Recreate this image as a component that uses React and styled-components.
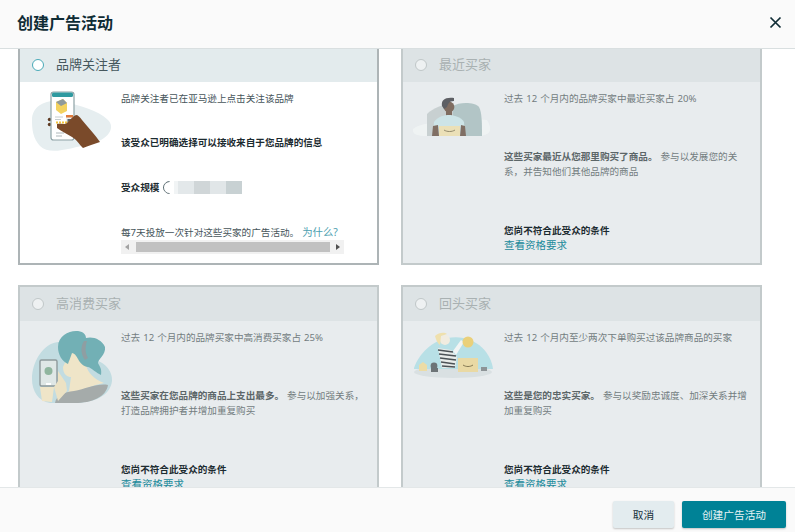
import React from "react";
import styled, { createGlobalStyle } from "styled-components";

const GlobalStyle = createGlobalStyle`
  html, body { margin: 0; padding: 0; background: #fff; }
  body { font-family: "Noto Sans", "Noto Sans CJK SC", sans-serif; }
`;

const Page = styled.div`
  display: flex;
  flex-direction: column;
  height: 100vh;
  overflow: hidden;
`;

const Header = styled.header`
  flex: none;
  box-sizing: border-box;
  height: 49px;
  display: flex;
  align-items: center;
  justify-content: space-between;
  padding: 0 13px 4px 17px;
  background: #fafafa;
  border-bottom: 1px solid #d9dfe0;
`;

const Title = styled.h1`
  margin: 0;
  font-size: 16px;
  font-weight: 700;
  color: #0f2c35;
`;

const CloseButton = styled.button`
  display: flex;
  padding: 0;
  border: 0;
  background: none;
  color: #0f2c35;
`;

const Body = styled.main`
  flex: 1;
  min-height: 0;
  overflow: hidden;
  padding-left: 18px;
`;

const Grid = styled.div`
  display: grid;
  grid-template-columns: 361px 361px;
  grid-auto-rows: 219px;
  column-gap: 22px;
  row-gap: 20px;
  margin-top: -3px;
`;

const Card = styled.section`
  box-sizing: border-box;
  display: flex;
  flex-direction: column;
  border: 2px solid ${(p) => (p.$disabled ? "#c3cacb" : "#adb4b6")};
  background: ${(p) => (p.$disabled ? "#e8ecee" : "#fff")};
`;

const CardHeader = styled.div`
  flex: none;
  height: 34px;
  display: flex;
  align-items: center;
  gap: 12px;
  padding-left: 12px;
  background: ${(p) => (p.$disabled ? "#dde3e5" : "#e3ebed")};
`;

const Radio = styled.span`
  box-sizing: border-box;
  width: 12px;
  height: 12px;
  border-radius: 50%;
  background: ${(p) => (p.$disabled ? "#eef1f2" : "#fff")};
  border: 1.5px solid ${(p) => (p.$disabled ? "#c0c7c8" : "#4aaab8")};
`;

const CardTitle = styled.span`
  margin-bottom: 3px;
  font-size: 13px;
  color: ${(p) => (p.$disabled ? "#a9b1b2" : "#46585d")};
`;

const CardBody = styled.div`
  flex: 1;
  min-height: 0;
  display: grid;
  grid-template-columns: 101px 1fr;
`;

const Illustration = styled.svg`
  display: block;
  width: 100px;
  height: 90px;
`;

const Copy = styled.div`
  padding-top: 9px;
  width: 243px;
`;

const Para = styled.p`
  margin: ${(p) => p.$top || 0}px 0 0;
  font-size: 9.6px;
  line-height: ${(p) => p.$line || 15}px;
  word-spacing: 0.5px;
  color: ${(p) => (p.$disabled ? "#737d7f" : "#46555a")};
`;

const Lead = styled.strong`
  font-weight: 700;
  color: ${(p) => (p.$disabled ? "#5c6668" : "#1c2b30")};
`;

const Ineligible = styled.p`
  margin: 44px 0 0;
  font-size: 9.6px;
  line-height: 15px;
  font-weight: 700;
  color: #1c2b30;
`;

const TextLink = styled.a`
  display: block;
  font-size: 10.5px;
  line-height: 15px;
  text-decoration: none;
  color: #1a8a9b;
`;

const InlineLink = styled.a`
  margin-left: 3px;
  color: #4d9fb0;
  font-size: 10.4px;
  text-decoration: none;
`;

const SizeRow = styled.div`
  display: flex;
  align-items: center;
  margin-top: 30px;
  height: 15px;
`;

const Spinner = styled.span`
  box-sizing: border-box;
  width: 13px;
  height: 13px;
  margin: 0 -2px 0 4px;
  flex: none;
  border-radius: 50%;
  border: 1.5px solid transparent;
  border-left-color: #5f7075;
  border-bottom-color: #5f7075;
  transform: rotate(45deg);
`;

const Tile = styled.span`
  width: ${(p) => p.$w}px;
  height: 13px;
  flex: none;
  background: ${(p) => p.$color};
`;

const ScrollBar = styled.div`
  display: flex;
  align-items: center;
  justify-content: space-between;
  width: 223px;
  height: 14px;
  background: #f1f1f1;
`;

const ScrollThumb = styled.div`
  width: 194px;
  height: 10px;
  background: #c1c1c1;
`;

const Arrow = styled.span`
  width: 0;
  height: 0;
  margin: 0 4px;
  border-top: 3px solid transparent;
  border-bottom: 3px solid transparent;
  ${(p) => (p.$right ? "border-left: 4px solid #505050;" : "border-right: 4px solid #a3a3a3;")}
`;

const Footer = styled.footer`
  flex: none;
  height: 45px;
  box-sizing: border-box;
  display: flex;
  justify-content: flex-end;
  gap: 8px;
  padding: 13px 9px 0 0;
  background: #fafafa;
  border-top: 1px solid #e3e7e8;
  position: relative;
`;

const Button = styled.button`
  width: ${(p) => (p.$primary ? 104 : 61)}px;
  height: 27px;
  padding: 0;
  border: 0;
  border-radius: 2px;
  font-family: inherit;
  font-size: 10.7px;
  color: ${(p) => (p.$primary ? "#e8f3f5" : "#16303a")};
  background: ${(p) => (p.$primary ? "#008296" : "#e3ecef")};
  box-shadow: 0 1px 2px rgba(0, 0, 0, 0.22);
`;

const FollowerArt = () => (
  <Illustration viewBox="0 0 100 90">
    <path d="M12 38C12 22 30 16 45 20C60 24 78 28 88 38C96 46 88 58 70 62C50 66 30 74 20 64C13 56 12 48 12 38Z" fill="#e6eef0" />
    <circle cx="29.5" cy="37.5" r="1.7" fill="#5d3a22" />
    <circle cx="29.5" cy="42.5" r="1.7" fill="#5d3a22" />
    <rect x="31" y="10" width="23" height="48" rx="2.5" fill="#fff" stroke="#8ea2a6" strokeWidth="1.2" />
    <rect x="32" y="10.5" width="21" height="4.5" rx="1.5" fill="#2f9aa0" />
    <path d="M36 20L43 17L47 21L47 29L41 32L36 28Z" fill="#f3d25f" />
    <path d="M36 20L43 17L47 21L41 24Z" fill="#8f9a9c" />
    <rect x="46" y="33" width="7" height="9" fill="#eef1f1" />
    <rect x="46" y="33" width="7" height="2.5" fill="#e07b3c" />
    <rect x="47.5" y="37" width="4" height="3.5" fill="#56646a" />
    <path d="M35 35H43M35 37.5H41" stroke="#b6c0c2" strokeWidth="0.8" />
    <path d="M36 40.5H50" stroke="#f2c33d" strokeWidth="2" strokeDasharray="2 1" />
    <path d="M36 51H44M36 54H42" stroke="#9aa5a8" strokeWidth="0.8" />
    <path d="M37 42C40 41 44 43 47 41C50 38 53 34 56 33C58 33 60 35 62 38C68 45 75 53 80 60C74 62 68 64 63 66C59 62 56 57 52 55C47 52 41 49 37 46Z" fill="#7a4a2a" />
  </Illustration>
);

const RecentArt = () => (
  <Illustration viewBox="0 0 100 90" opacity="0.85">
    <path d="M10 47C20 38 72 36 84 38C90 48 88 54 74 54L24 54C14 54 9 52 10 47Z" fill="#f1f5f5" />
    <path d="M24 54L24 32C30 26 40 22 50 22L50 54Z" fill="#c3cccd" />
    <path d="M50 24C56 20 72 20 76 25C79 30 79 42 79 54L50 54Z" fill="#a9bfc0" />
    <circle cx="46" cy="25" r="5.4" fill="#6d5648" />
    <path d="M39 24C38 18 42 15 51 16L51 19C46 19 45 22 44 25L41 27Z" fill="#45474c" />
    <rect x="43" y="29" width="6" height="5" fill="#6d5648" />
    <path d="M30 54L31 40C35 34 42 33 46 33C51 33 58 35 61 40L62 54Z" fill="#c9e3e6" />
    <path d="M29 54L30 44L35 43L36 54ZM57 54L58 43L62 44L63 54Z" fill="#6e5a4d" />
    <rect x="36" y="44" width="21" height="10" fill="#ecdfae" />
    <path d="M41 48C44 50 49 50 52 48" stroke="#6b6140" strokeWidth="0.8" fill="none" />
  </Illustration>
);

const SpenderArt = () => (
  <Illustration viewBox="0 0 100 90">
    <path d="M12 58C12 40 24 22 38 21C48 20 60 30 72 38C84 40 93 50 92 60C90 76 72 82 55 82L30 82C18 80 12 70 12 58Z" fill="#c2dce1" />
    <path d="M50 31L43 46C43 54 48 56 51 56L49 70L36 82L56 72C68 66 78 63 84 62C74 58 68 52 66 44L64 30Z" fill="#efe5c8" />
    <path d="M35 82C36 75 44 71 54 70C66 68 78 62 88 64C86 76 72 82 55 82Z" fill="#a5abaa" />
    <path d="M38 26C38 14 50 9 58 10C64 11 66 14 66 17C72 15 82 18 85 26C86 34 78 38 78 42C80 46 82 48 81 54C76 52 72 47 68 46C64 46 60 42 58 38C56 34 54 32 52 32C50 38 49 40 48 43C42 40 38 34 38 26Z" fill="#72b0b5" />
    <path d="M64 20C60 26 61 34 65 39L68 37C65 32 65 26 67 20Z" fill="#8f9ea2" />
    <path d="M20 66L22 80L32 81L34 66Z" fill="#efe5c8" />
    <rect x="20" y="39" width="17" height="26" rx="1.5" fill="#dfe7e6" stroke="#8f9a9c" strokeWidth="1.4" />
    <circle cx="28.5" cy="50" r="4" fill="#8fb59e" />
    <rect x="26" y="62" width="5" height="2" fill="#fff" />
    <path d="M38 50L46 62L47 70L38 80L34 66L38 60Z" fill="#ece2c4" />
  </Illustration>
);

const LoyalArt = () => (
  <Illustration viewBox="0 0 100 90">
    <ellipse cx="50" cy="51" rx="39" ry="6" fill="#d9e0e2" />
    <path d="M11 47C16 32 30 20 44 17C70 12 88 30 90 48L11 48Z" fill="#b8e0e6" />
    <circle cx="42" cy="19" r="5" fill="#f1ece0" />
    <path d="M32 15C36 11 42 11 44 13L38 15L37 24C34 22 33 18 32 15Z" fill="#efe0ad" />
    <path d="M35 27L48 29L54 36L52 47L39 47Z" fill="#e8ecea" />
    <path d="M35 29L50 31M36 33L53 35M37 37L53 39M38 41L52 43M39 45L52 46" stroke="#4c5357" strokeWidth="1.7" />
    <path d="M50 30L58 19L61 21L53 34Z" fill="#f2f4f4" />
    <circle cx="65" cy="21" r="5.5" fill="#ead07a" />
    <rect x="55" y="37" width="20" height="14" fill="#e9d9a4" />
    <path d="M60 44C63 46 67 46 70 44" stroke="#6b6140" strokeWidth="0.8" fill="none" />
    <path d="M16 50L16 44L20 41L24 44L24 50Z" fill="#ecdca6" />
    <circle cx="31" cy="45" r="3.4" fill="#6d7477" />
    <rect x="28" y="47" width="7" height="4" fill="#6d7477" />
    <rect x="78" y="46" width="6" height="4" fill="#8d9497" />
  </Illustration>
);

const Eligibility = () => (
  <>
    <Ineligible>您尚不符合此受众的条件</Ineligible>
    <TextLink href="#">查看资格要求</TextLink>
  </>
);

const audiences = [
  {
    title: "最近买家",
    art: <RecentArt />,
    stat: "过去 12 个月内的品牌买家中最近买家占 20%",
    lead: "这些买家最近从您那里购买了商品。",
    rest: " 参与以发展您的关系，并告知他们其他品牌的商品",
  },
  {
    title: "高消费买家",
    art: <SpenderArt />,
    stat: "过去 12 个月内的品牌买家中高消费买家占 25%",
    lead: "这些买家在您品牌的商品上支出最多。",
    rest: " 参与以加强关系，打造品牌拥护者并增加重复购买",
  },
  {
    title: "回头买家",
    art: <LoyalArt />,
    stat: "过去 12 个月内至少两次下单购买过该品牌商品的买家",
    lead: "这些是您的忠实买家。",
    rest: " 参与以奖励忠诚度、加深关系并增加重复购买",
  },
];

export default function App() {
  return (
    <Page>
      <GlobalStyle />
      <Header>
        <Title>创建广告活动</Title>
        <CloseButton aria-label="关闭">
          <svg width="13" height="13" viewBox="0 0 13 13">
            <path d="M1.5 1.5L11.5 11.5M11.5 1.5L1.5 11.5" stroke="currentColor" strokeWidth="1.7" fill="none" />
          </svg>
        </CloseButton>
      </Header>

      <Body>
        <Grid>
          <Card>
            <CardHeader>
              <Radio />
              <CardTitle>品牌关注者</CardTitle>
            </CardHeader>
            <CardBody>
              <FollowerArt />
              <Copy>
                <Para>品牌关注者已在亚马逊上点击关注该品牌</Para>
                <Para $top={29}>
                  <Lead>该受众已明确选择可以接收来自于您品牌的信息</Lead>
                </Para>
                <SizeRow>
                  <Para>
                    <Lead>受众规模</Lead>
                  </Para>
                  <Spinner />
                  <Tile $w={4} $color="#f1f4f5" />
                  <Tile $w={16} $color="#e3e8ea" />
                  <Tile $w={16} $color="#d0d6d8" />
                  <Tile $w={16} $color="#e1e6e8" />
                  <Tile $w={16} $color="#c8d1d3" />
                </SizeRow>
                <Para $top={30}>
                  每7天投放一次针对这些买家的广告活动。
                  <InlineLink href="#">为什么?</InlineLink>
                </Para>
                <ScrollBar>
                  <Arrow />
                  <ScrollThumb />
                  <Arrow $right />
                </ScrollBar>
              </Copy>
            </CardBody>
          </Card>

          {audiences.map((a) => (
            <Card $disabled key={a.title}>
              <CardHeader $disabled>
                <Radio $disabled />
                <CardTitle $disabled>{a.title}</CardTitle>
              </CardHeader>
              <CardBody>
                {a.art}
                <Copy>
                  <Para $disabled>{a.stat}</Para>
                  <Para $disabled $top={44} $line={14.5}>
                    <Lead $disabled>{a.lead}</Lead>
                    {a.rest}
                  </Para>
                  <Eligibility />
                </Copy>
              </CardBody>
            </Card>
          ))}
        </Grid>
      </Body>

      <Footer>
        <Button>取消</Button>
        <Button $primary>创建广告活动</Button>
      </Footer>
    </Page>
  );
}
